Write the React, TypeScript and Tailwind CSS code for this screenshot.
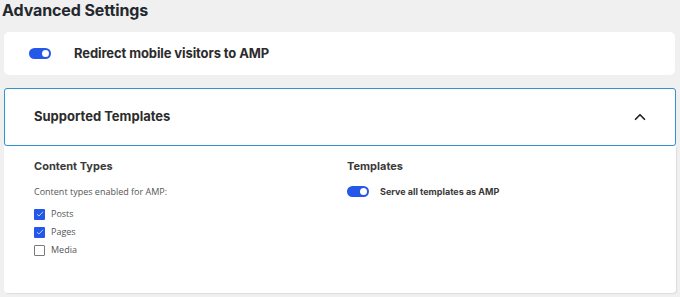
import React from 'react';
import { ChevronUp } from 'lucide-react';

function Toggle() {
  return (
    <div className="w-[22px] h-[11px] rounded-full bg-[#2557e8] flex items-center justify-end pr-[2px] shrink-0">
      <div className="w-[7px] h-[7px] rounded-full bg-white"></div>
    </div>
  );
}

function Checkbox({ checked, label }: { checked: boolean; label: string }) {
  return (
    <label className="flex items-center gap-[6px] h-[18px]">
      {checked ? (
        <span className="w-[11px] h-[11px] bg-[#2557e8] rounded-[1px] flex items-center justify-center">
          <svg width="8" height="8" viewBox="0 0 8 8" fill="none">
            <path d="M1 4.2 L3 6 L7 1.8" stroke="#c9d6ff" strokeWidth="0.9" />
          </svg>
        </span>
      ) : (
        <span className="w-[11px] h-[11px] border border-[#7a7a7a] rounded-[1px] bg-white"></span>
      )}
      <span className="text-[9px] text-[#555]">{label}</span>
    </label>
  );
}

export default function App() {
  return (
    <div
      className="w-[680px] h-[297px] overflow-hidden bg-[#f0f0f1] text-[#2c2c2c]"
      style={{ fontFamily: '"Open Sans", "Noto Sans", sans-serif' }}
    >
      <h2 className="pl-[2px] text-[16px] leading-[20px] font-bold text-[#23282d] tracking-[-0.1px]" style={{ fontFamily: 'Inter, sans-serif' }}>
        Advanced Settings
      </h2>

      <div className="mt-[12px] ml-[4px] w-[671px] h-[43px] bg-white rounded-[5px] flex items-center pl-[25px] gap-[23px]">
        <Toggle />
        <span className="text-[13px] font-bold text-[#2c2c2c] tracking-[-0.1px]" style={{ fontFamily: 'Inter, sans-serif' }}>
          Redirect mobile visitors to AMP
        </span>
      </div>

      <div className="mt-[13px] ml-[4px] w-[672px]">
        <div className="h-[58px] bg-white border border-[#2f93d6] rounded-[3px] flex items-center justify-between pl-[29px] pr-[26px]">
          <span className="text-[13px] font-bold text-[#2c2c2c]" style={{ fontFamily: 'Inter, sans-serif' }}>
            Supported Templates
          </span>
          <ChevronUp size={18} strokeWidth={2.2} className="text-[#1e1e1e]" />
        </div>
        <div className="h-[147px] bg-white rounded-b-[4px] shadow-[1px_1px_1px_rgba(0,0,0,0.08)] grid grid-cols-[313px_1fr] pl-[30px] pt-[12px]">
          <div>
            <h3 className="text-[11px] font-bold text-[#3a3a3a] leading-[16px]" style={{ fontFamily: 'Inter, sans-serif' }}>
              Content Types
            </h3>
            <p className="mt-[11px] text-[9px] text-[#555] leading-[14px]">Content types enabled for AMP:</p>
            <div className="mt-[6px] flex flex-col">
              <Checkbox checked label="Posts" />
              <Checkbox checked label="Pages" />
              <Checkbox checked={false} label="Media" />
            </div>
          </div>
          <div>
            <h3 className="text-[11px] font-bold text-[#3a3a3a] leading-[16px]" style={{ fontFamily: 'Inter, sans-serif' }}>
              Templates
            </h3>
            <div className="mt-[11px] flex items-center gap-[11px]">
              <Toggle />
              <span className="text-[9px] font-bold text-[#3a3a3a]" style={{ fontFamily: 'Inter, sans-serif' }}>
                Serve all templates as AMP
              </span>
            </div>
          </div>
        </div>
      </div>
    </div>
  );
}
